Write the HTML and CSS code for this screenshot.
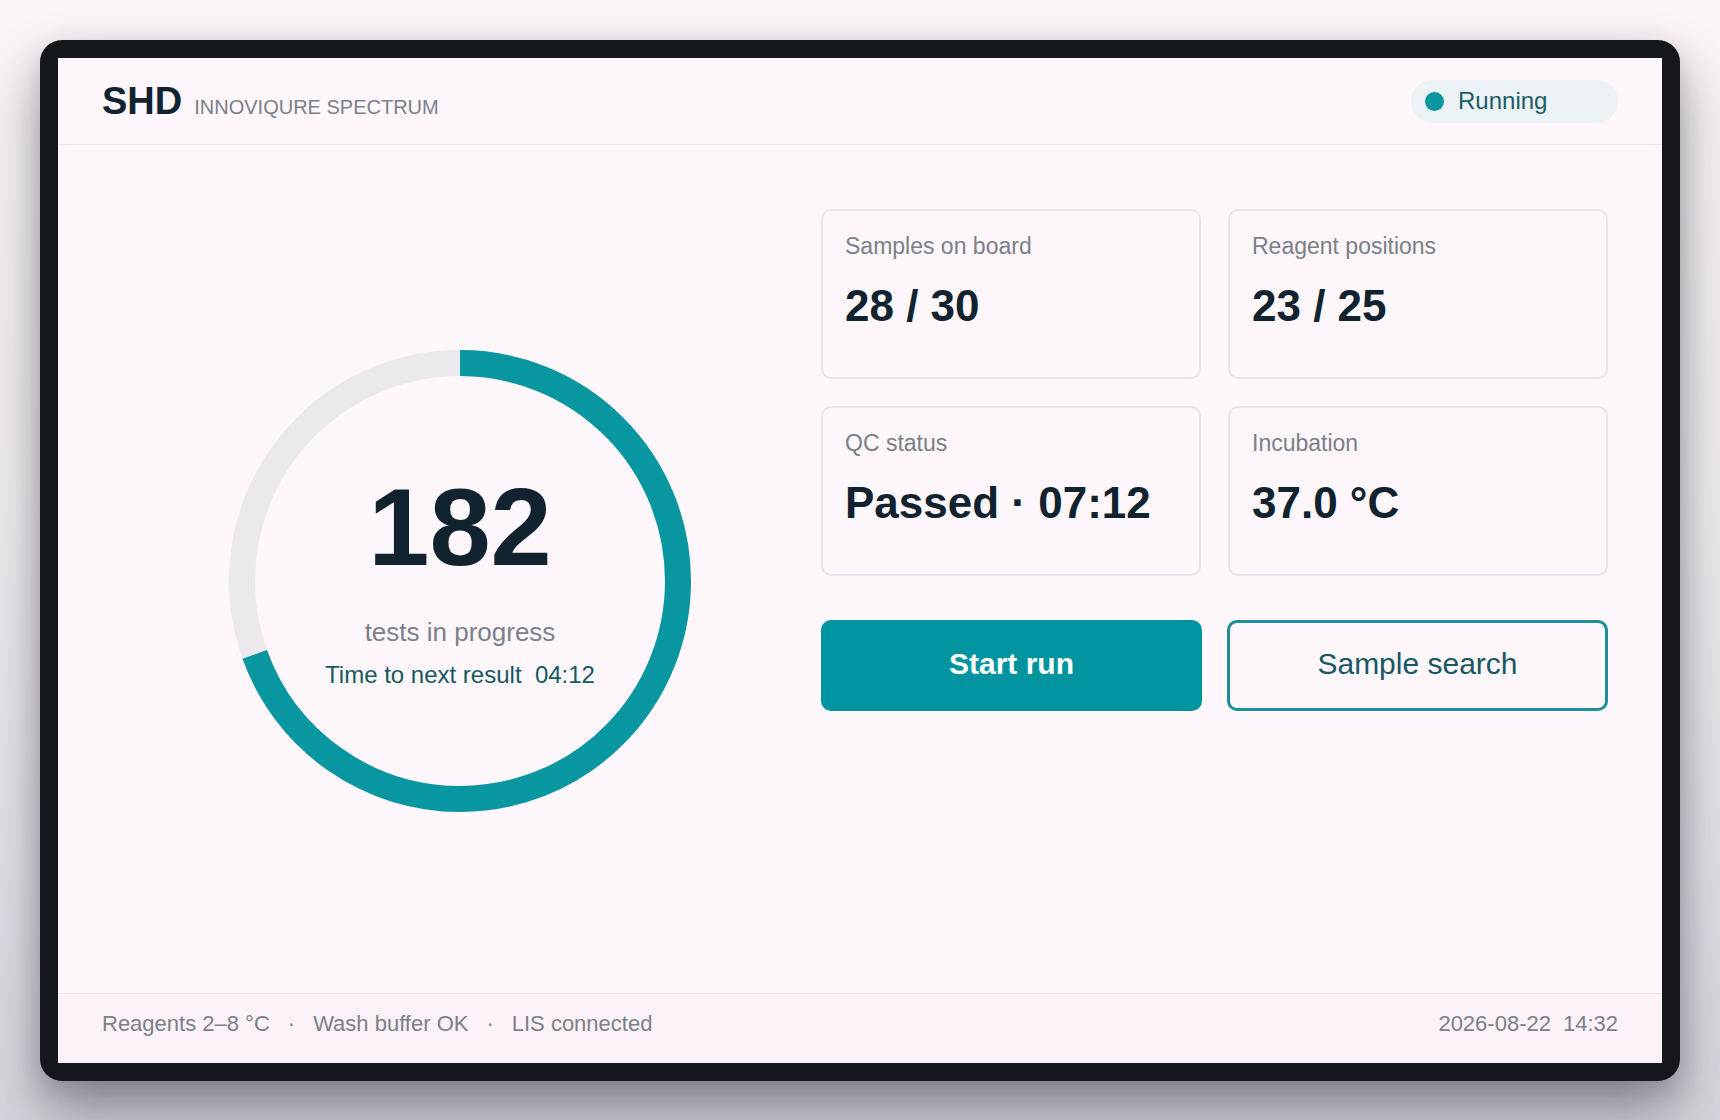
FILE: index.html
```html
<!DOCTYPE html>
<html lang="en">
<head>
<meta charset="utf-8">
<title>SHD Innoviqure Spectrum</title>
<link rel="stylesheet" href="styles.css">
</head>
<body>
<div class="device">
  <div class="screen">
    <header class="topbar">
      <div class="brand">
        <span class="brand-mark">SHD</span>
        <span class="brand-sub">INNOVIQURE SPECTRUM</span>
      </div>
      <div class="status-pill">
        <span class="status-dot"></span>
        <span class="status-text">Running</span>
      </div>
    </header>

    <main class="main">
      <section class="gauge-col">
        <div class="gauge">
          <svg class="gauge-svg" width="462" height="462" viewBox="0 0 462 462">
            <circle cx="231" cy="231" r="218" fill="none" stroke="#ebe8ee" stroke-width="26"/>
            <circle cx="231" cy="231" r="218" fill="none" stroke="#0896a1" stroke-width="26"
              stroke-dasharray="952 1400" transform="rotate(-90 231 231)"/>
          </svg>
          <div class="gauge-text">
            <div class="gauge-num">182</div>
            <div class="gauge-label">tests in progress</div>
            <div class="gauge-time">Time to next result&nbsp;&nbsp;04:12</div>
          </div>
        </div>
      </section>

      <section class="side">
        <div class="cards">
          <div class="card">
            <div class="card-label">Samples on board</div>
            <div class="card-value">28 / 30</div>
          </div>
          <div class="card">
            <div class="card-label">Reagent positions</div>
            <div class="card-value">23 / 25</div>
          </div>
          <div class="card">
            <div class="card-label">QC status</div>
            <div class="card-value">Passed · 07:12</div>
          </div>
          <div class="card">
            <div class="card-label">Incubation</div>
            <div class="card-value">37.0 °C</div>
          </div>
        </div>
        <div class="actions">
          <button class="btn btn-primary">Start run</button>
          <button class="btn btn-outline">Sample search</button>
        </div>
      </section>
    </main>

    <footer class="footbar">
      <div class="foot-left">
        <span>Reagents 2–8 °C</span>
        <span class="sep">·</span>
        <span>Wash buffer OK</span>
        <span class="sep">·</span>
        <span>LIS connected</span>
      </div>
      <div class="foot-right">
        <span>2026-08-22</span>
        <span>14:32</span>
      </div>
    </footer>
  </div>
</div>
</body>
</html>
```

FILE: styles.css
```css
* { box-sizing: border-box; }

html, body {
  margin: 0;
  padding: 0;
}

body {
  width: 1720px;
  height: 1120px;
  overflow: hidden;
  font-family: "Liberation Sans", Arial, sans-serif;
  background: linear-gradient(180deg, #fbf4f9 0%, #f2ecf2 45%, #e2e0e7 80%, #d6d6dd 100%);
  padding: 40px;
}

.device {
  width: 1640px;
  height: 1041px;
  background: #14171b;
  border-radius: 22px;
  padding: 18px;
  box-shadow: 0 34px 60px rgba(40, 42, 52, 0.42), 0 8px 24px rgba(40, 40, 50, 0.18);
}

.screen {
  width: 1604px;
  height: 1005px;
  background: #fdf6fb;
  display: flex;
  flex-direction: column;
  overflow: hidden;
}

/* Header */
.topbar {
  height: 87px;
  flex: none;
  display: flex;
  align-items: center;
  justify-content: space-between;
  padding: 0 44px;
  border-bottom: 1px solid #e9e4ec;
}

.brand {
  display: flex;
  align-items: baseline;
  gap: 12px;
}

.brand-mark {
  font-size: 38px;
  font-weight: 700;
  line-height: 1;
  color: #11232f;
}

.brand-sub {
  font-size: 20px;
  color: #7b808a;
  line-height: 1;
}

.status-pill {
  width: 207px;
  height: 43px;
  border-radius: 22px;
  background: #ecf1f5;
  display: flex;
  align-items: center;
  gap: 14px;
  padding-left: 14px;
}

.status-dot {
  width: 19px;
  height: 19px;
  border-radius: 50%;
  background: #0896a1;
  flex: none;
}

.status-text {
  font-size: 24px;
  color: #1b5d68;
}

/* Main */
.main {
  flex: 1;
  display: grid;
  grid-template-columns: 716px 787px;
  justify-content: space-between;
  padding: 64px 54px 40px 44px;
}

.gauge-col {
  display: flex;
  align-items: center;
  justify-content: center;
}

.gauge {
  display: grid;
  width: 462px;
  height: 462px;
}

.gauge-svg,
.gauge-text {
  grid-area: 1 / 1;
}

.gauge-svg {
  display: block;
}

.gauge-text {
  display: flex;
  flex-direction: column;
  align-items: center;
  justify-content: center;
  padding-bottom: 1px;
}

.gauge-num {
  font-size: 110px;
  font-weight: 700;
  line-height: 1;
  color: #11232f;
}

.gauge-label {
  margin-top: 35px;
  font-size: 26px;
  line-height: 1.2;
  color: #7b808a;
}

.gauge-time {
  margin-top: 13px;
  font-size: 24px;
  line-height: 1.2;
  color: #175862;
}

/* Side */
.side {
  display: flex;
  flex-direction: column;
}

.cards {
  display: grid;
  grid-template-columns: 380px 380px;
  grid-auto-rows: 170px;
  gap: 27px;
}

.card {
  border: 2px solid #e9e4eb;
  border-radius: 10px;
  padding: 22px 22px;
}

.card-label {
  font-size: 23px;
  line-height: 1.2;
  color: #7b7f88;
}

.card-value {
  margin-top: 19px;
  font-size: 44px;
  font-weight: 700;
  line-height: 1.2;
  color: #11232f;
}

.actions {
  margin-top: 44px;
  display: grid;
  grid-template-columns: 381px 381px;
  justify-content: space-between;
}

.btn {
  height: 91px;
  border-radius: 10px;
  font-family: "Liberation Sans", Arial, sans-serif;
  font-size: 30px;
  padding: 0 0 3px;
  cursor: pointer;
}

.btn-primary {
  background: #0094a0;
  border: none;
  color: #ffffff;
  font-weight: 700;
}

.btn-outline {
  background: transparent;
  border: 3px solid #1a8f9a;
  color: #175862;
  font-weight: 400;
}

/* Footer */
.footbar {
  height: 70px;
  flex: none;
  border-top: 1px solid #ebe5ee;
  background: #faf2f8;
  display: flex;
  align-items: center;
  justify-content: space-between;
  padding: 0 44px 10px;
  font-size: 22px;
  color: #7b808a;
}

.foot-left {
  display: flex;
  align-items: center;
}

.foot-left .sep {
  margin: 0 18px;
}

.foot-right {
  display: flex;
  gap: 12px;
}
```
